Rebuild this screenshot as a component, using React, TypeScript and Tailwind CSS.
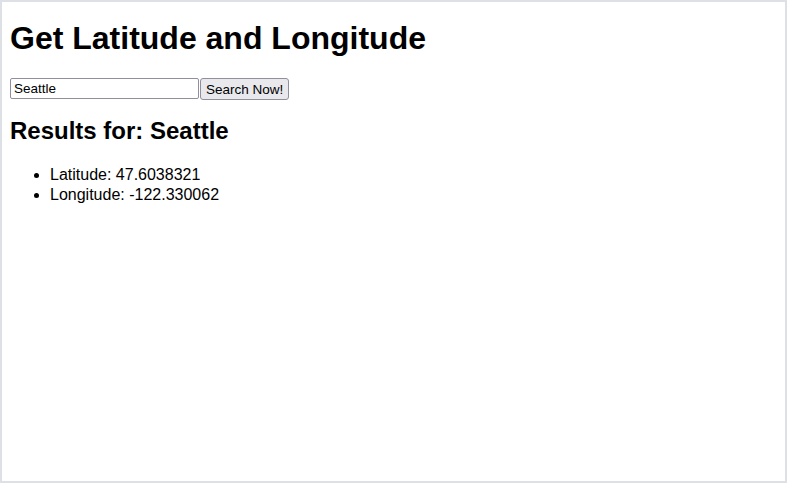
export default function App() {
  return (
    <div
      className="w-[787px] h-[483px] border-2 border-[#dde0e4] bg-white px-2 text-black"
      style={{ fontFamily: '"Liberation Sans", Arial, sans-serif' }}
    >
      <h1 className="mt-[18px] text-[32px] leading-[37px] font-bold">Get Latitude and Longitude</h1>

      <form className="mt-[21px] flex items-start" onSubmit={(e) => e.preventDefault()}>
        <input
          type="text"
          defaultValue="Seattle"
          className="w-[189px] h-[21px] border border-[#8f8f9d] rounded-[2px] px-[3px] text-[13.5px] leading-[15px] outline-none"
        />
        <button
          type="submit"
          className="ml-px h-[22px] px-[5px] border border-[#8f8f9d] rounded-[3px] bg-[#e9e9ed] text-[13.5px] leading-[15px]"
        >
          Search Now!
        </button>
      </form>

      <h2 className="mt-[17px] text-[24px] leading-[28px] font-bold">Results for: Seattle</h2>

      <ul className="mt-[20px] list-disc pl-10 text-[16px] leading-5">
        <li>Latitude: 47.6038321</li>
        <li>Longitude: -122.330062</li>
      </ul>
    </div>
  )
}
